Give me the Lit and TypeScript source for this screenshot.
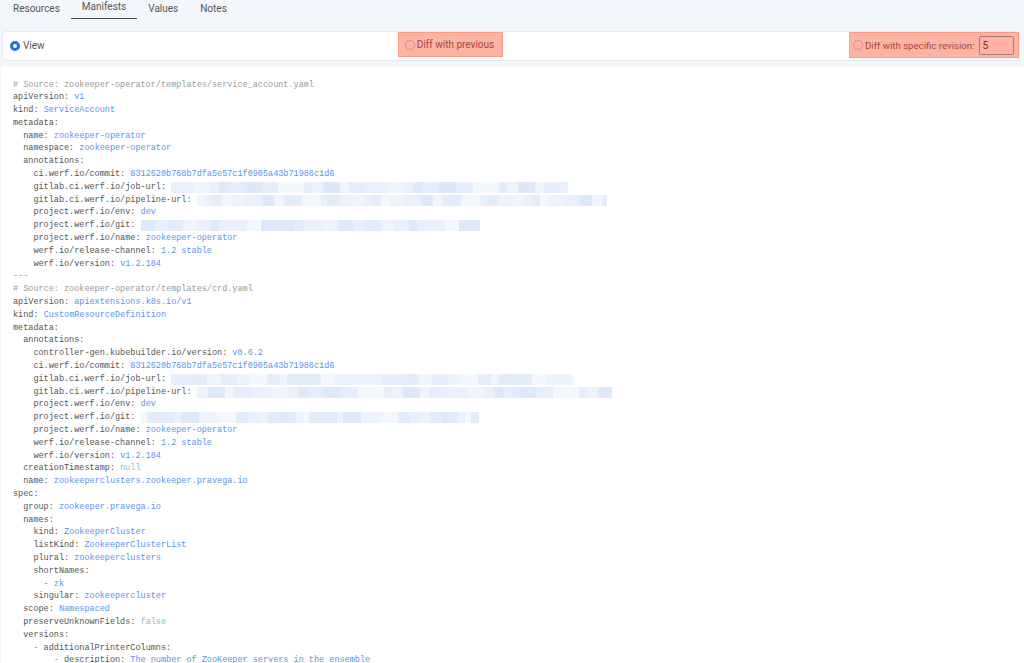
import { LitElement, html, css } from "lit";
import { customElement } from "lit/decorators.js";

const SRC = `# Source: zookeeper-operator/templates/service_account.yaml
apiVersion: v1
kind: ServiceAccount
metadata:
  name: zookeeper-operator
  namespace: zookeeper-operator
  annotations:
    ci.werf.io/commit: 8312620b768b7dfa5e57c1f0905a43b71986c1d6
    gitlab.ci.werf.io/job-url: @@397:11
    gitlab.ci.werf.io/pipeline-url: @@410:23
    project.werf.io/env: dev
    project.werf.io/git: @@339:37
    project.werf.io/name: zookeeper-operator
    werf.io/release-channel: 1.2 stable
    werf.io/version: v1.2.184
---
# Source: zookeeper-operator/templates/crd.yaml
apiVersion: apiextensions.k8s.io/v1
kind: CustomResourceDefinition
metadata:
  annotations:
    controller-gen.kubebuilder.io/version: v0.6.2
    ci.werf.io/commit: 8312620b768b7dfa5e57c1f0905a43b71986c1d6
    gitlab.ci.werf.io/job-url: @@402:51
    gitlab.ci.werf.io/pipeline-url: @@415:67
    project.werf.io/env: dev
    project.werf.io/git: @@338:79
    project.werf.io/name: zookeeper-operator
    werf.io/release-channel: 1.2 stable
    werf.io/version: v1.2.184
  creationTimestamp: null
  name: zookeeperclusters.zookeeper.pravega.io
spec:
  group: zookeeper.pravega.io
  names:
    kind: ZookeeperCluster
    listKind: ZookeeperClusterList
    plural: zookeeperclusters
    shortNames:
      - zk
    singular: zookeepercluster
  scope: Namespaced
  preserveUnknownFields: false
  versions:
    - additionalPrinterColumns:
        - description: The number of ZooKeeper servers in the ensemble`.split("\n");

function cells(width: number, seed: number) {
  const out: { w: number; c: string }[] = [];
  let left = width;
  let s = seed;
  while (left > 0) {
    s = (s * 137 + 29) % 211;
    const w = Math.min(left, 6 + (s % 13));
    const a = 0.1 + ((s % 7) / 6) * 0.22;
    out.push({ w, c: `rgba(150,185,240,${a.toFixed(2)})` });
    left -= w;
  }
  return out;
}

function renderLine(line: string) {
  if (line.startsWith("#") || line === "---") return html`<div class="ln cm">${line}</div>`;
  const m = line.match(/^(\s*(?:- )?)(.*)$/)!;
  const [, lead, rest] = m;
  const dash = lead.includes("-")
    ? html`${lead.slice(0, lead.indexOf("-"))}<span class="val">- </span>`
    : lead;
  const i = rest.indexOf(": ");
  if (i < 0) {
    const isKey = rest.endsWith(":");
    return html`<div class="ln">${dash}<span class=${isKey ? "key" : "val"}>${rest}</span></div>`;
  }
  const key = rest.slice(0, i + 1);
  const val = rest.slice(i + 2);
  if (val.startsWith("@@")) {
    const [w, seed] = val.slice(2).split(":").map(Number);
    return html`<div class="ln">${dash}<span class="key">${key}</span> <span class="blur"
      >${cells(w, seed).map(
        (c) => html`<i style="width:${c.w}px;background:${c.c}"></i>`
      )}</span></div>`;
  }
  const lit = val === "null" || val === "false";
  return html`<div class="ln">${dash}<span class="key">${key}</span> <span class=${lit ? "lit" : "val"}>${val}</span></div>`;
}

@customElement("app-root")
export class AppRoot extends LitElement {
  static styles = css`
    :host {
      display: block;
      height: 663px;
      overflow: hidden;
      background: #f3f6fb;
      font-family: Roboto, "Liberation Sans", sans-serif;
      font-size: 10px;
      color: #555;
    }
    .tabs {
      display: flex;
      height: 19px;
      padding-left: 2px;
    }
    .tab {
      padding: 2px 11px 0;
      line-height: 13px;
      box-sizing: border-box;
      white-space: nowrap;
    }
    .tab.active {
      padding-top: 0;
      border-bottom: 1.5px solid #444;
    }
    .bar {
      margin: 12px 4px 0 2px;
      height: 30px;
      box-sizing: border-box;
      background: #fff;
      border: 1px solid #e6e9ef;
      border-radius: 4px;
      display: flex;
      align-items: flex-start;
      justify-content: space-between;
      padding-left: 7px;
      padding-right: 0;
    }
    .opt {
      display: flex;
      align-items: center;
      gap: 2px;
      height: 26px;
      color: #555;
      white-space: nowrap;
    }
    .first {
      height: 27px;
      gap: 3px;
    }
    .radio {
      width: 8px;
      height: 8px;
      border-radius: 50%;
      border: 1px solid #b9b9b9;
      background: #fff;
      flex: none;
    }
    .radio.on {
      width: 4px;
      height: 4px;
      border: 3px solid #1a73e8;
    }
    .hl {
      background: #ffb3a5;
      outline: 1.5px solid #ff9a87;
      outline-offset: -1.5px;
      color: #9c4a42;
      box-sizing: border-box;
    }
    .hl .radio {
      background: transparent;
      border-color: #d98f84;
    }
    .a {
      width: 105px;
      height: 25px;
      padding-left: 7px;
      margin-left: 7px;
    }
    .b {
      width: 170px;
      padding-left: 4px;
      font-size: 9.65px;
    }
    .input {
      width: 35px;
      height: 19px;
      box-sizing: border-box;
      border: 1px solid #a87a72;
      border-radius: 2px;
      padding-left: 2px;
      line-height: 17px;
      font-size: 10px;
      color: #7a2f28;
      margin-left: 3px;
    }
    .code {
      margin: 6px 0 0 1px;
      padding: 11.5px 12px 0;
      background: #fff;
      font-family: "Liberation Mono", monospace;
      font-size: 8.5px;
      line-height: 12.8px;
      white-space: pre;
      height: 590px;
      overflow: hidden;
      color: #555;
    }
    .ln {
      height: 12.8px;
    }
    .cm {
      color: #9a9a9a;
    }
    .key {
      color: #555;
    }
    .val {
      color: #5b94ee;
    }
    .lit {
      color: #7fc3c6;
    }
    .blur {
      display: inline-flex;
      height: 11px;
      margin-top: 1px;
      vertical-align: top;
      filter: blur(0.6px);
    }
    .blur i {
      display: block;
      height: 100%;
    }
  `;

  render() {
    return html`
      <nav class="tabs">
        <div class="tab">Resources</div>
        <div class="tab active">Manifests</div>
        <div class="tab">Values</div>
        <div class="tab">Notes</div>
      </nav>
      <section class="bar">
        <div class="opt first"><span class="radio on"></span>View</div>
        <div class="opt hl a"><span class="radio"></span>Diff with previous</div>
        <div class="opt hl b"><span class="radio"></span>Diff with specific revision:<span class="input">5</span></div>
      </section>
      <div class="code">${SRC.map(renderLine)}</div>
    `;
  }
}
